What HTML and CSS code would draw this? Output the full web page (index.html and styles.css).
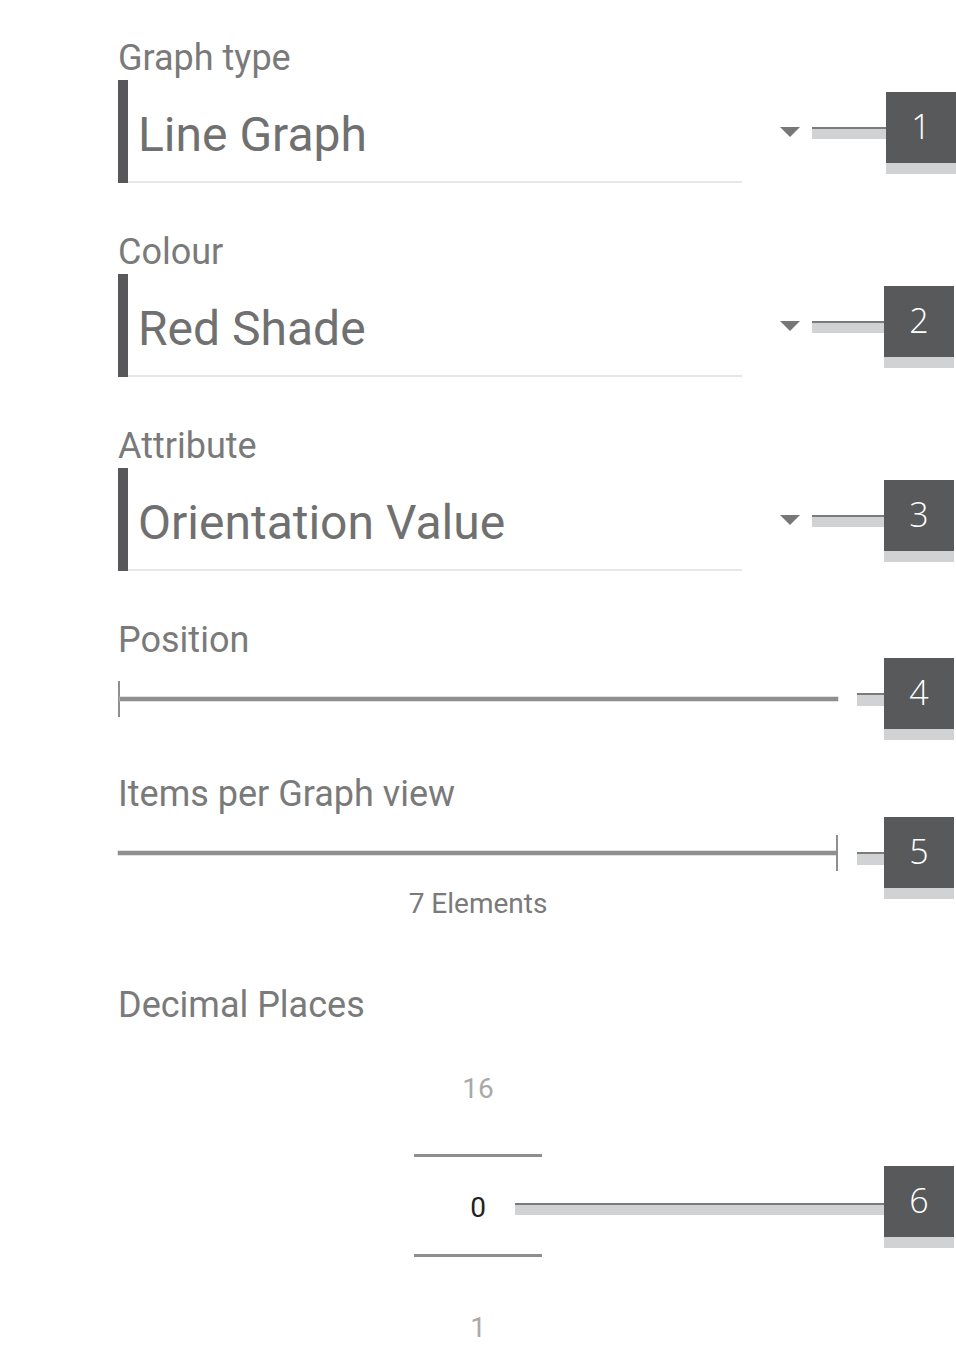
FILE: index.html
```html
<!DOCTYPE html>
<html lang="en">
<head>
    <meta charset="UTF-8">
    <meta name="viewport" content="width=device-width, initial-scale=1.0">
    <title>Graph Settings</title>
    <link rel="stylesheet" href="styles.css">
</head>
<body>
    <div class="page">
        <!-- Graph type -->
        <section class="group">
            <div class="label">Graph type</div>
            <div class="row first">
                <div class="select"><div class="select-value">Line Graph</div></div>
                <span class="arrow"></span>
                <span class="connector"></span>
                <div class="callout">1</div>
            </div>
        </section>

        <!-- Colour -->
        <section class="group">
            <div class="label">Colour</div>
            <div class="row">
                <div class="select"><div class="select-value">Red Shade</div></div>
                <span class="arrow"></span>
                <span class="connector"></span>
                <div class="callout">2</div>
            </div>
        </section>

        <!-- Attribute -->
        <section class="group">
            <div class="label">Attribute</div>
            <div class="row">
                <div class="select"><div class="select-value">Orientation Value</div></div>
                <span class="arrow"></span>
                <span class="connector"></span>
                <div class="callout">3</div>
            </div>
        </section>

        <!-- Position slider -->
        <section class="slider-group">
            <div class="label">Position</div>
            <div class="slider-row">
                <div class="slider">
                    <span class="tick"></span>
                    <span class="track"></span>
                </div>
                <span class="connector short"></span>
                <div class="callout">4</div>
            </div>
        </section>

        <!-- Items per view slider -->
        <section class="slider-group items">
            <div class="label">Items per Graph view</div>
            <div class="slider-row">
                <div class="slider up">
                    <span class="track"></span>
                    <span class="tick"></span>
                </div>
                <span class="connector short"></span>
                <div class="callout">5</div>
            </div>
            <div class="caption">7 Elements</div>
        </section>

        <!-- Decimal places picker -->
        <section class="picker-group">
            <div class="label">Decimal Places</div>
            <div class="picker">
                <div class="picker-item">16</div>
                <div class="picker-line"></div>
                <div class="picker-mid">
                    0
                    <div class="annot">
                        <span class="connector long"></span>
                        <div class="callout">6</div>
                    </div>
                </div>
                <div class="picker-line"></div>
                <div class="picker-item last">1</div>
            </div>
        </section>
    </div>
</body>
</html>
```

FILE: styles.css
```css
body {
    margin: 0;
    padding: 0;
    background-color: #ffffff;
    font-family: Roboto, 'Noto Sans', sans-serif;
    overflow: hidden;
}
.page {
    width: 956px;
    padding-top: 37px;
}
.label {
    padding-left: 118px;
    font-size: 36px;
    line-height: 42px;
    color: #7a7a7a;
    margin-bottom: 1px;
}
.group {
    margin-bottom: 48px;
}

/* dropdown rows */
.row {
    display: flex;
    align-items: center;
    padding-left: 118px;
}
.select {
    width: 624px;
    box-sizing: border-box;
    border-left: 10px solid #58585a;
}
.select-value {
    height: 103px;
    box-sizing: border-box;
    padding: 31px 0 0 10px;
    font-size: 48px;
    line-height: 48px;
    color: #707070;
    border-bottom: 2px solid #e6e6e6;
}
.arrow {
    width: 0;
    height: 0;
    margin-left: 38px;
    border-left: 10px solid transparent;
    border-right: 10px solid transparent;
    border-top: 10px solid #777777;
}
.connector {
    display: block;
    width: 72px;
    height: 10px;
    margin-left: 12px;
    border-top: 2px solid #7b7b7b;
    background-color: #d1d2d4;
}
.row .connector, .row .callout {
    margin-top: 3px;
}
.row.first .connector {
    width: 74px;
}
.callout {
    width: 70px;
    height: 71px;
    box-sizing: content-box;
    margin-right: 2px;
    display: flex;
    align-items: center;
    justify-content: center;
    background-color: #58595b;
    border-bottom: 11px solid #d1d2d4;
    color: #ffffff;
    font-family: 'Open Sans', sans-serif;
    font-weight: 300;
    font-size: 34px;
    line-height: 34px;
    padding-bottom: 0;
}
.callout::after {
    content: "";
    display: block;
    height: 3px;
}
.callout {
    flex-direction: column;
}
.row.first .callout {
    margin-right: 0;
}

/* sliders */
.slider-group .label {
    margin-bottom: 0;
}
.slider-row {
    display: flex;
    align-items: center;
    padding-left: 118px;
    margin-top: -3px;
}
.slider-group.items {
    margin-top: 33px;
}
.slider-group.items .slider-row {
    margin-top: 2px;
}
.slider {
    width: 720px;
    height: 36px;
    display: flex;
    align-items: center;
}
.slider.up {
    margin-bottom: 10px;
}
.track {
    flex: 1;
    height: 4px;
    background-color: #8f8f8f;
    box-shadow: 0 0 0 0.5px #c4c4c4;
}
.tick {
    width: 2px;
    height: 36px;
    background-color: #8f8f8f;
}
.connector.short {
    width: 27px;
    height: 11px;
    margin-left: 19px;
}
.caption {
    margin-top: -12px;
    text-align: center;
    font-size: 28px;
    line-height: 34px;
    color: #7a7a7a;
}

/* number picker */
.picker-group {
    margin-top: 63px;
}
.picker-group .label {
    margin-bottom: 0;
}
.picker {
    width: 128px;
    margin: 43px auto 0;
    text-align: center;
}
.picker-item {
    height: 40px;
    line-height: 40px;
    font-size: 28px;
    color: #a9a9a9;
}
.picker-line {
    height: 3px;
    margin-top: 45px;
    background-color: #8e8e8e;
}
.picker-item.last {
    margin-top: 51px;
}
.picker-mid {
    position: relative;
    height: 97px;
    box-sizing: border-box;
    padding-top: 4px;
    line-height: 93px;
    font-size: 28px;
    color: #222222;
}
.picker-mid + .picker-line {
    margin-top: 0;
}
.annot {
    position: absolute;
    left: 101px;
    top: 9px;
    display: flex;
    align-items: center;
}
.connector.long {
    width: 369px;
    margin-left: 0;
    margin-top: 4px;
}
```
